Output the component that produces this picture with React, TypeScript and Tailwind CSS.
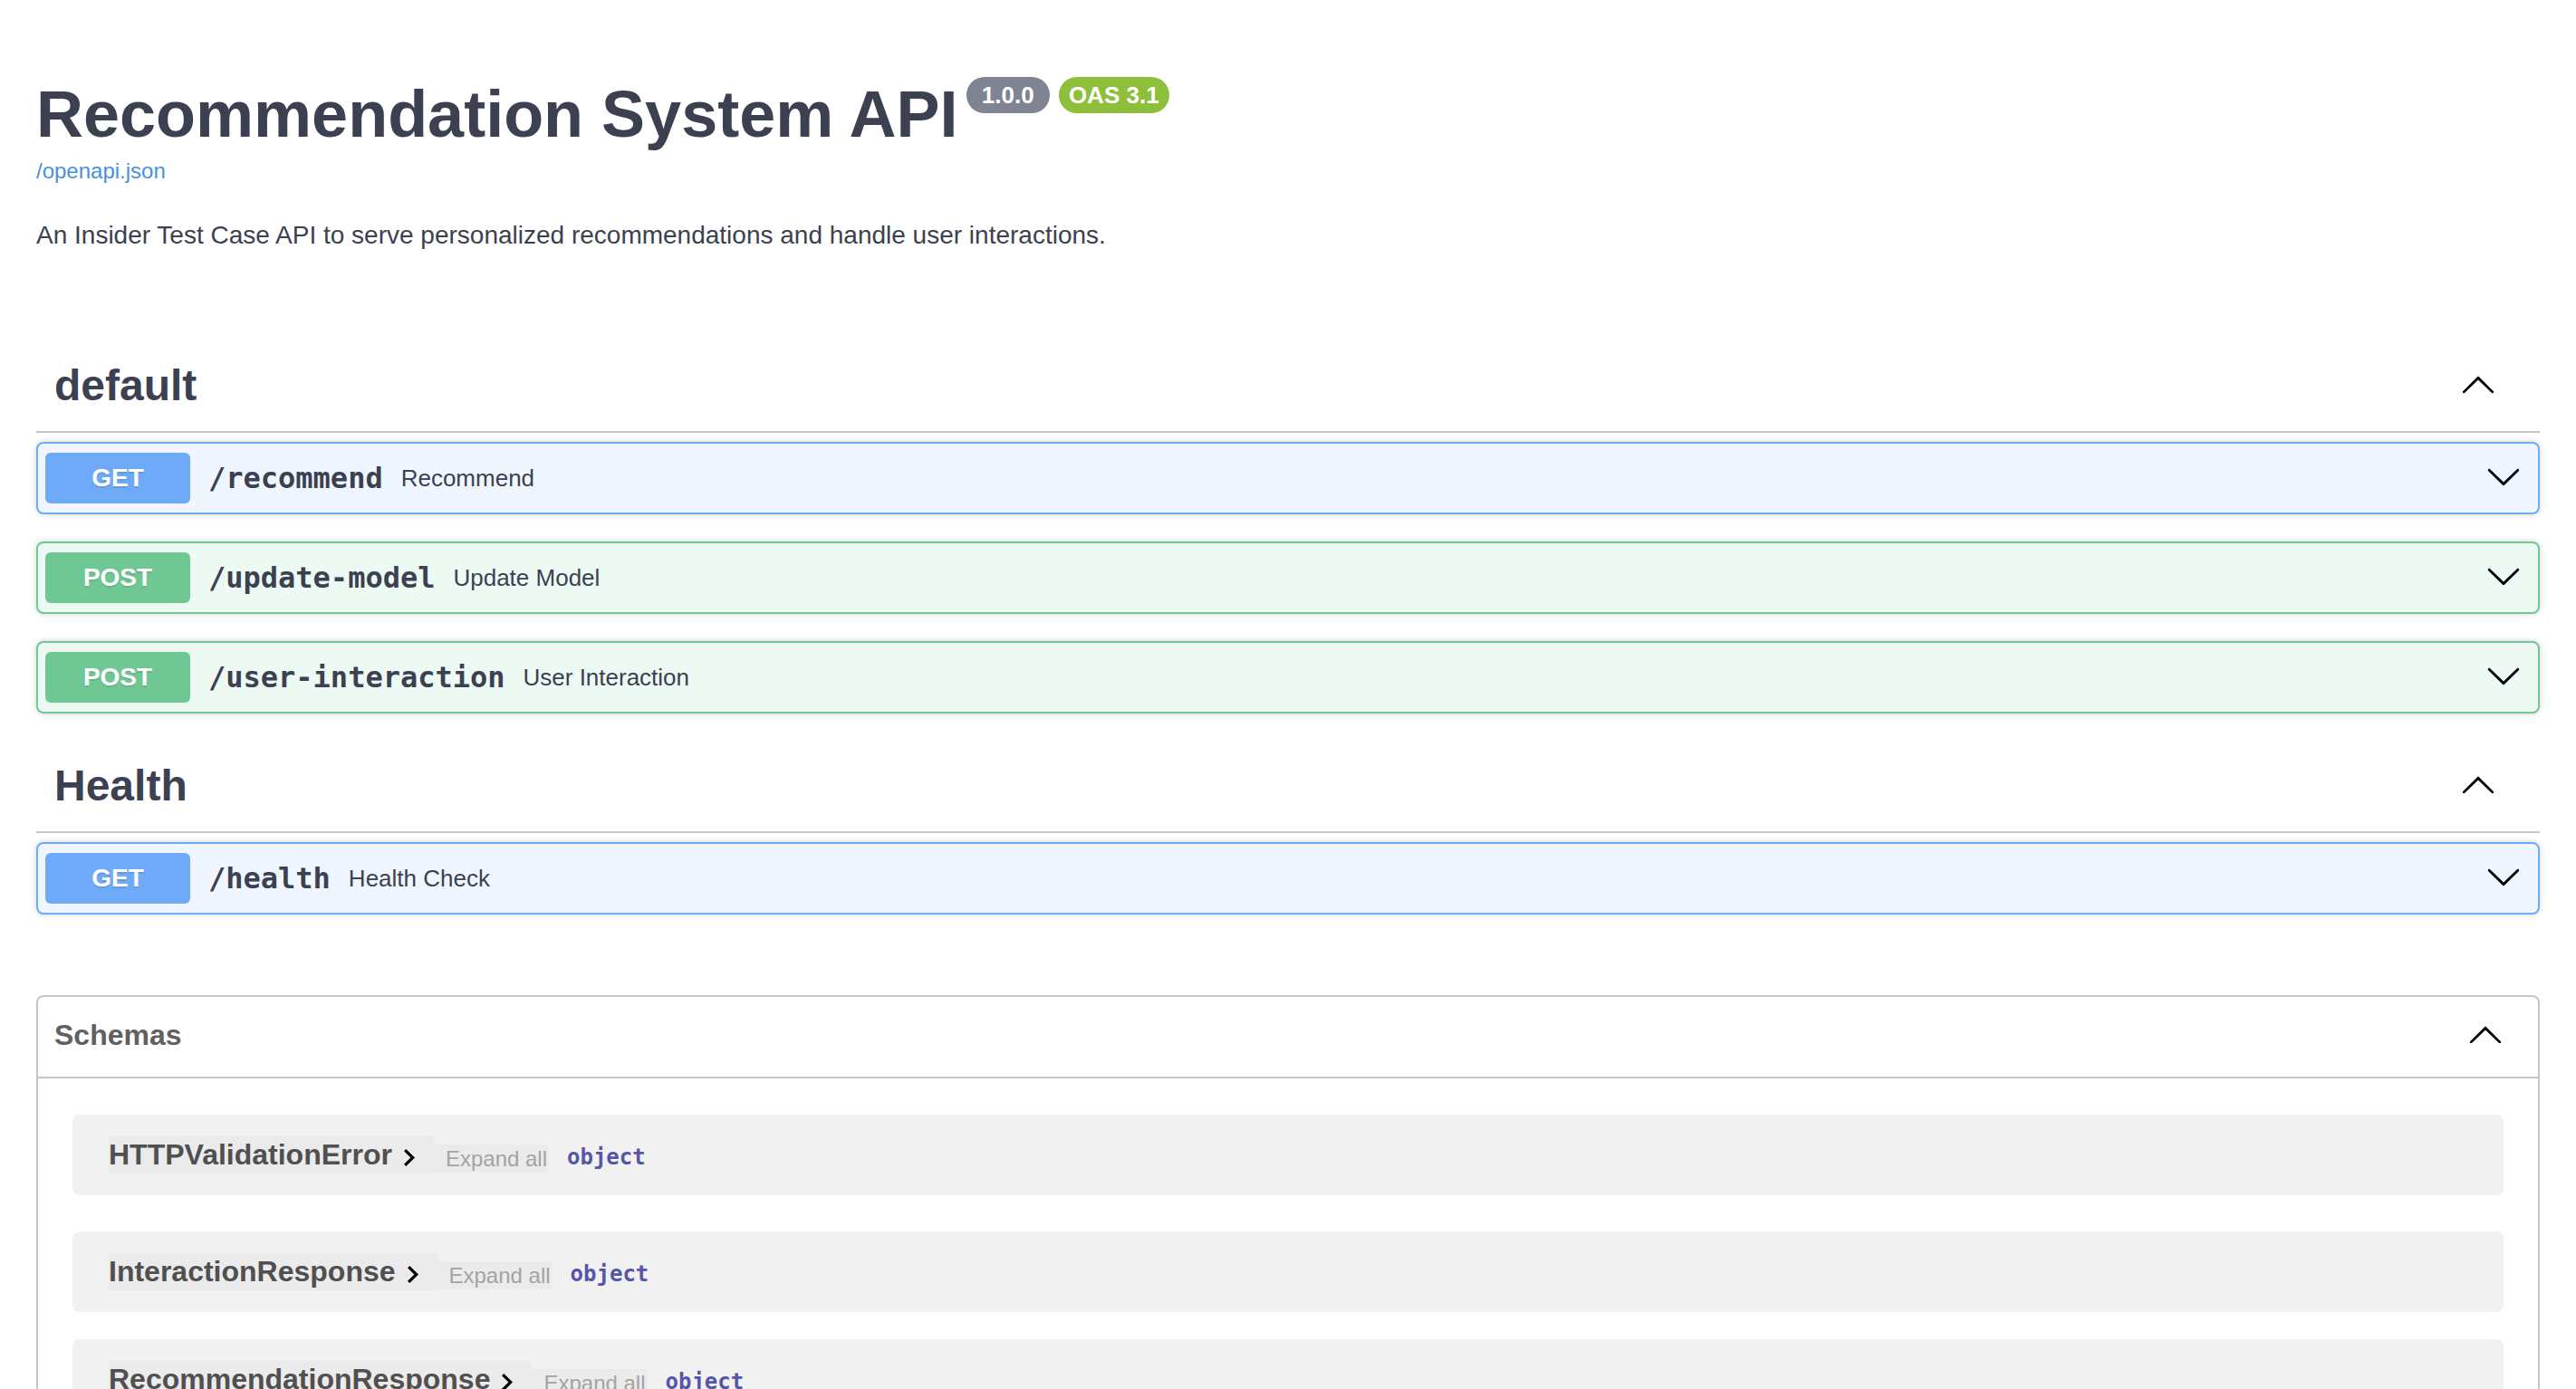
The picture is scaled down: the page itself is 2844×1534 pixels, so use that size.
import React from "react";

const DOWN =
  "M17.418 6.109c.272-.268.709-.268.979 0s.271.701 0 .969l-7.908 7.83c-.27.268-.707.268-.979 0l-7.908-7.83c-.27-.268-.27-.701 0-.969.271-.268.709-.268.979 0L10 13.25l7.418-7.141z";
const UP =
  "M17.418 14.908c.272.268.709.268.979 0s.271-.701 0-.969l-7.908-7.83c-.27-.268-.707-.268-.979 0l-7.908 7.83c-.27.268-.27.701 0 .969.271.268.709.268.979 0L10 7.771l7.418 7.137z";

function Arrow({ up, className = "" }: { up?: boolean; className?: string }) {
  return (
    <svg
      className={className}
      width="40"
      height="40"
      viewBox="0 0 20 20"
      aria-hidden="true"
    >
      <path d={up ? UP : DOWN} fill="#000" />
    </svg>
  );
}

function Tag({ title, className = "" }: { title: string; className?: string }) {
  return (
    <div
      className={`mb-[10px] flex h-[102px] items-center justify-between border-b-2 border-[#c4c6cb] pl-[20px] pr-[48px] ${className}`}
    >
      <h3 className="m-0 text-[48px] font-bold leading-[60px] text-[#3b4151]">
        {title}
      </h3>
      <Arrow up className="-mt-[4px]" />
    </div>
  );
}

function Op({
  method,
  path,
  desc,
}: {
  method: "GET" | "POST";
  path: string;
  desc: string;
}) {
  const get = method === "GET";
  return (
    <div
      className={`mb-[30px] flex h-[80px] items-center rounded-[8px] border-2 pl-[8px] pr-[18px] shadow-[0_0_6px_rgba(0,0,0,0.19)] ${
        get ? "border-[#6cadf9] bg-[#eff6ff]" : "border-[#6fc996] bg-[#edf9f3]"
      }`}
    >
      <span
        className={`flex h-[56px] w-[160px] items-center justify-center rounded-[6px] text-[28px] font-bold text-white [text-shadow:0_2px_0_rgba(0,0,0,0.1)] ${
          get ? "bg-[#6eaaf8]" : "bg-[#6fc794]"
        }`}
      >
        {method}
      </span>
      <span className="px-[20px] font-['DejaVu_Sans_Mono',monospace] text-[32px] font-bold text-[#3b4151]">
        {path}
      </span>
      <span className="text-[26px] text-[#3b4151]">{desc}</span>
      <Arrow className="ml-auto -mt-[4px]" />
    </div>
  );
}

function Model({ name, className = "" }: { name: string; className?: string }) {
  return (
    <div
      className={`flex h-[89px] items-start rounded-[8px] bg-[#f1f1f1] pl-[40px] pt-[24px] ${className}`}
    >
      <span className="flex h-[41px] items-center bg-[#ebebeb]">
        <span className="text-[32px] font-bold leading-[41px] text-[#505050]">
          {name}
        </span>
        <svg
          className="ml-[13px] mr-[21px] mt-[6px]"
          width="12"
          height="19"
          viewBox="8.59 6 7.41 12"
          preserveAspectRatio="none"
          aria-hidden="true"
        >
          <path d="M10 6 8.59 7.41 13.17 12l-4.58 4.59L10 18l6-6z" fill="#000" />
        </svg>
      </span>
      <span className="mt-[9px] h-[31px] bg-[#ebebeb] pl-[13px] pr-[1px] text-[24px] leading-[31px] text-[#a3a3a3]">
        Expand all
      </span>
      <span className="ml-[21px] mt-[8px] font-['DejaVu_Sans_Mono',monospace] text-[24px] font-bold leading-[31px] text-[#5555aa]">
        object
      </span>
    </div>
  );
}

export default function App() {
  return (
    <div className="h-[1534px] overflow-hidden bg-white font-['Liberation_Sans',Arial,sans-serif] text-[#3b4151]">
      <div className="px-[40px]">
        <div className="pt-[85px]">
          <div className="flex items-start">
            <h2 className="m-0 text-[72px] font-bold leading-[83px] text-[#3b4151]">
              Recommendation System API
            </h2>
            <span className="ml-[9px] flex h-[40px] items-center whitespace-pre rounded-full bg-[#7f8492] px-[10px] text-[26px] font-bold leading-none text-white">
              {" 1.0.0 "}
            </span>
            <span className="ml-[10px] flex h-[40px] items-center rounded-full bg-[#8dbf3a] px-[11px] text-[26px] font-bold leading-none text-white">
              OAS 3.1
            </span>
          </div>
          <a
            href="#"
            className="mt-[7px] block w-fit text-[24px] leading-[28px] text-[#4990e2]"
          >
            /openapi.json
          </a>
          <p className="m-0 mt-[41px] text-[28px] leading-[32px] text-[#3b4151]">
            An Insider Test Case API to serve personalized recommendations and
            handle user interactions.
          </p>
        </div>

        <Tag title="default" className="mt-[100px]" />
        <Op method="GET" path="/recommend" desc="Recommend" />
        <Op method="POST" path="/update-model" desc="Update Model" />
        <Op method="POST" path="/user-interaction" desc="User Interaction" />

        <Tag title="Health" />
        <Op method="GET" path="/health" desc="Health Check" />

        <section className="mt-[89px] rounded-[8px] border-2 border-[#c4c6cb]">
          <div className="flex h-[90px] items-center justify-between border-b-2 border-[#c4c6cb] pl-[18px] pr-[38px]">
            <span className="-mt-[5px] text-[32px] font-bold text-[#606060]">
              Schemas
            </span>
            <Arrow up className="-mt-[6px]" />
          </div>
          <div className="flex flex-col px-[38px] pt-[40px]">
            <Model name="HTTPValidationError" className="mb-[40px]" />
            <Model name="InteractionResponse" className="mb-[30px]" />
            <Model name="RecommendationResponse" className="mb-[30px]" />
            <Model name="UserInteraction" className="mb-[30px]" />
            <Model name="ValidationError" className="mb-[30px]" />
          </div>
        </section>
      </div>
    </div>
  );
}
